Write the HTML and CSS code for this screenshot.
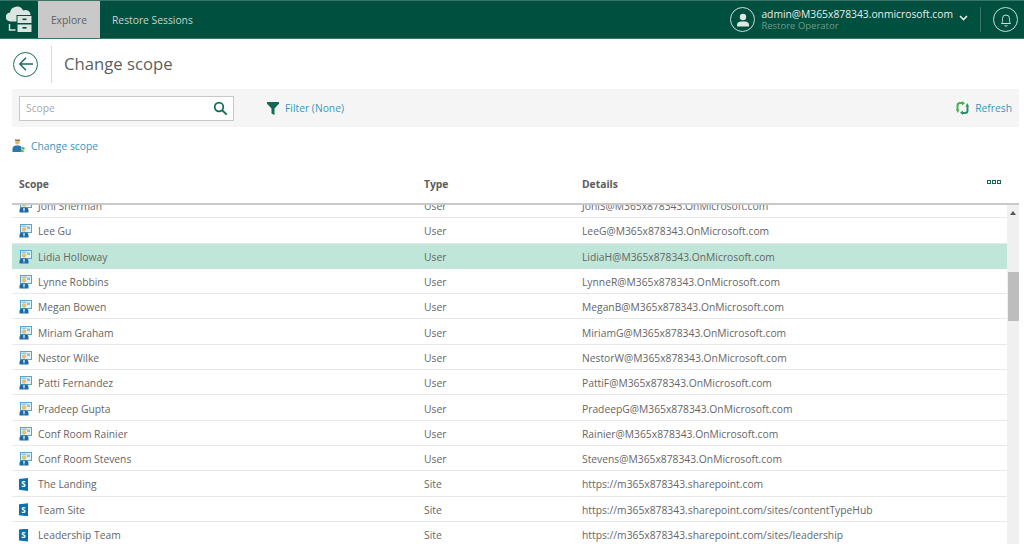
FILE: index.html
```html
<!DOCTYPE html>
<html lang="en">
<head>
<meta charset="utf-8">
<title>Change scope</title>
<link rel="stylesheet" href="styles.css">
</head>
<body>
<svg class="defs" width="0" height="0" aria-hidden="true">
  <symbol id="user" viewBox="0 0 13 14">
    <rect x="1.500" y="0.500" width="11" height="8" fill="#e4f0f6" stroke="#5aa3cd"/>
    <rect x="8" y="2.500" width="3" height="2.500" fill="#8cc0dc"/>
    <rect x="2.500" y="1.500" width="5" height="1.500" fill="#9ac6de"/>
    <circle cx="5" cy="5.500" r="2.200" fill="#e6bd72"/>
    <path d="M0.500 13.500V11q0-2.200 2.200-2.500h4.600q2.200.3 2.200 2.500v2.500z" fill="#1f6aa5"/>
    <path d="M5 8.500l-.9 1.200.9 3.800.9-3.800z" fill="#dfeaf2"/>
  </symbol>
</svg>

<header class="topbar">
  <div class="brand">
    <svg width="27" height="28" viewBox="0 0 27 28">
      <path d="M4.500 15.500a4.500 4.500 0 0 1-.5-9A7 7 0 0 1 17.200 4.500 5 5 0 0 1 24.500 9H10.500v6.500z" fill="#dbe5e1"/>
      <path d="M3.500 18v6h6" fill="none" stroke="#dbe5e1" stroke-width="1.400"/>
      <path d="M11.500 10h14v7h-14zM11.500 18.500h14V26h-14z" fill="#dbe5e1"/>
      <rect x="16.500" y="12.500" width="4" height="1.600" fill="#00503f"/>
      <rect x="16.500" y="21" width="4" height="1.600" fill="#00503f"/>
    </svg>
  </div>
  <nav class="tabs">
    <a class="tab tab-active">Explore</a>
    <a class="tab">Restore Sessions</a>
  </nav>
  <div class="account">
    <span class="avatar">
      <svg width="14" height="14" viewBox="0 0 14 14"><circle cx="7" cy="4" r="3.200" fill="#dfe8e4"/><path d="M1 13.500V12q0-3 3.500-3.500h5Q13 9 13 12v1.500z" fill="#dfe8e4"/></svg>
    </span>
    <div class="who">
      <div class="who-name">admin@M365x878343.onmicrosoft.com</div>
      <div class="who-role">Restore Operator</div>
    </div>
    <svg class="caret" width="9" height="6" viewBox="0 0 9 6"><path d="M1 1l3.500 3.500L8 1" fill="none" stroke="#e6eeeb" stroke-width="1.600"/></svg>
    <span class="bar-sep"></span>
    <span class="bell">
      <svg width="14" height="16" viewBox="0 0 14 16"><path d="M2.500 11.500c1-1 1-2.500 1-5a3.500 3.500 0 0 1 7 0c0 2.500 0 4 1 5zM5.500 13.500q1.500 1.400 3 0" fill="none" stroke="#cfdcd7" stroke-width="1"/></svg>
    </span>
  </div>
</header>

<section class="title-row">
  <button class="back" aria-label="Back">
    <svg width="16" height="16" viewBox="0 0 16 16"><path d="M15 8H2M8 1.800 1.800 8 8 14.200" fill="none" stroke="#1a6b57" stroke-width="1.400"/></svg>
  </button>
  <h1 class="title">Change scope</h1>
</section>

<section class="toolbar">
  <div class="search">
    <span class="search-text">Scope</span>
    <svg width="15" height="15" viewBox="0 0 15 15"><circle cx="6" cy="6" r="4.300" fill="none" stroke="#0f6b55" stroke-width="1.700"/><path d="M9.300 9.300l4.400 4.400" stroke="#0f6b55" stroke-width="1.900"/></svg>
  </div>
  <a class="link filter">
    <svg width="12" height="13" viewBox="0 0 12 13"><path d="M0 0h12v1.800L7.500 6.500V13L4.500 11.500V6.500L0 1.800z" fill="#0f6b55"/></svg>
    Filter (None)
  </a>
  <a class="link refresh">
    <svg width="13" height="14" viewBox="0 0 13 14">
      <path d="M6.500 2H4Q1.500 2 1.500 4.500V9" fill="none" stroke="#4cae4f" stroke-width="2"/>
      <path d="M6 0v4.500L9 2.200zM0 8.500h3.500L1.700 12z" fill="#4cae4f"/>
      <path d="M6.500 12H9q2.500 0 2.500-2.500V5" fill="none" stroke="#2f8f6b" stroke-width="2"/>
      <path d="M7 14V9.500L4 11.800zM13 5.500H9.500L11.300 2z" fill="#2f8f6b"/>
    </svg>
    Refresh
  </a>
</section>

<a class="link scope-link">
  <svg width="14" height="14" viewBox="0 0 14 14">
    <circle cx="5.500" cy="3.200" r="2.300" fill="#e0b870"/>
    <rect x="3" y="0.500" width="5" height="1.500" fill="#8a7a45"/>
    <path d="M0.500 13v-3Q.5 7 3.500 6.500h4Q9 7 9.500 8v5z" fill="#2a79ac"/>
    <path d="M10 7.500l3 1.500-1 2-2-1zM8.500 12.500l1-2 3 1.500-2 1.500z" fill="#62b566"/>
  </svg>
  Change scope
</a>

<section class="table">
  <div class="head">
    <div class="head-row">
      <span class="cell-scope">Scope</span>
      <span>Type</span>
      <span>Details</span>
    </div>
    <span class="columns-btn"><i></i><i></i><i></i></span>
  </div>
  <div class="body">
    <div class="rows">
      <div class="row"><span class="cell-scope"><svg class="ico"><use href="#user"/></svg>Joni Sherman</span><span>User</span><span>JoniS@M365x878343.OnMicrosoft.com</span></div>
      <div class="row"><span class="cell-scope"><svg class="ico"><use href="#user"/></svg>Lee Gu</span><span>User</span><span>LeeG@M365x878343.OnMicrosoft.com</span></div>
      <div class="row row-selected"><span class="cell-scope"><svg class="ico"><use href="#user"/></svg>Lidia Holloway</span><span>User</span><span>LidiaH@M365x878343.OnMicrosoft.com</span></div>
      <div class="row"><span class="cell-scope"><svg class="ico"><use href="#user"/></svg>Lynne Robbins</span><span>User</span><span>LynneR@M365x878343.OnMicrosoft.com</span></div>
      <div class="row"><span class="cell-scope"><svg class="ico"><use href="#user"/></svg>Megan Bowen</span><span>User</span><span>MeganB@M365x878343.OnMicrosoft.com</span></div>
      <div class="row"><span class="cell-scope"><svg class="ico"><use href="#user"/></svg>Miriam Graham</span><span>User</span><span>MiriamG@M365x878343.OnMicrosoft.com</span></div>
      <div class="row"><span class="cell-scope"><svg class="ico"><use href="#user"/></svg>Nestor Wilke</span><span>User</span><span>NestorW@M365x878343.OnMicrosoft.com</span></div>
      <div class="row"><span class="cell-scope"><svg class="ico"><use href="#user"/></svg>Patti Fernandez</span><span>User</span><span>PattiF@M365x878343.OnMicrosoft.com</span></div>
      <div class="row"><span class="cell-scope"><svg class="ico"><use href="#user"/></svg>Pradeep Gupta</span><span>User</span><span>PradeepG@M365x878343.OnMicrosoft.com</span></div>
      <div class="row"><span class="cell-scope"><svg class="ico"><use href="#user"/></svg>Conf Room Rainier</span><span>User</span><span>Rainier@M365x878343.OnMicrosoft.com</span></div>
      <div class="row"><span class="cell-scope"><svg class="ico"><use href="#user"/></svg>Conf Room Stevens</span><span>User</span><span>Stevens@M365x878343.OnMicrosoft.com</span></div>
      <div class="row"><span class="cell-scope"><span class="site-ico">S</span>The Landing</span><span>Site</span><span>https://m365x878343.sharepoint.com</span></div>
      <div class="row"><span class="cell-scope"><span class="site-ico">S</span>Team Site</span><span>Site</span><span>https://m365x878343.sharepoint.com/sites/contentTypeHub</span></div>
      <div class="row"><span class="cell-scope"><span class="site-ico">S</span>Leadership Team</span><span>Site</span><span>https://m365x878343.sharepoint.com/sites/leadership</span></div>
    </div>
    <div class="scrollbar">
      <span class="arrow"></span>
      <span class="thumb"></span>
    </div>
  </div>
</section>
</body>
</html>
```

FILE: styles.css
```css
* { box-sizing: border-box; }
html, body { margin: 0; height: 544px; overflow: hidden; }
body { background: #fff; font-family: "Open Sans", sans-serif; font-size: 10.300px; color: #666; }
.defs { position: absolute; }

.topbar { height: 39px; display: flex; background: #00503f; border-top: 1px solid #3a7566; border-bottom: 1px solid #3a7566; }
.brand { width: 38px; display: flex; align-items: center; justify-content: center; }
.tabs { display: flex; }
.tab { display: flex; align-items: center; justify-content: center; color: #c3d4ce; padding: 0 12px; }
.tab-active { width: 62px; padding: 0; background: #c9c9c9; color: #5d6360; }
.account { margin-left: auto; display: flex; align-items: center; padding-right: 6px; }
.avatar, .bell { width: 25px; height: 25px; border: 1px solid #cfdcd7; border-radius: 50%; display: flex; align-items: center; justify-content: center; }
.who { margin-left: 6px; line-height: 11px; }
.who-name { color: #e6eeeb; }
.who-role { color: #6f9a8d; font-size: 9.500px; }
.caret { margin-left: 6px; margin-top: -4px; }
.bar-sep { width: 1px; height: 25px; background: #3a7566; margin: 0 12px 0 12px; }

.title-row { height: 50px; display: flex; align-items: center; padding: 0 0 0 13px; }
.back { width: 25px; height: 25px; padding: 0; border: 1px solid #1a6b57; border-radius: 50%; background: #fff; display: flex; align-items: center; justify-content: center; }
.title { margin: 0 0 0 13px; padding-left: 12px; height: 37px; border-left: 1px solid #d9d9d9; font-size: 16.700px; font-weight: 400; line-height: 36px; color: #5b6160; }

.toolbar { height: 38px; margin: 0 5px 0 12px; padding: 0 7px; display: flex; align-items: center; background: #f5f5f5; }
.search { width: 215px; height: 25px; padding: 0 5px 0 6px; display: flex; align-items: center; justify-content: space-between; background: #fff; border: 1px solid #c8c8c8; }
.search-text { color: #a8a8a8; }
.link { display: flex; align-items: center; color: #3d95bd; }
.filter { margin-left: 33px; gap: 6px; }
.refresh { margin-left: auto; gap: 6px; }
.scope-link { height: 38px; padding-left: 12px; gap: 5px; }

.table { margin: 0 5px 0 12px; }
.head { position: relative; height: 40px; border-bottom: 2px solid #c9c9c9; }
.head-row, .row { display: grid; grid-template-columns: 412px 158px 1fr; align-items: center; }
.head-row { height: 38px; font-weight: 700; color: #5c5c5c; }
.cell-scope { padding-left: 7px; display: flex; align-items: center; }
.columns-btn { position: absolute; right: 18px; top: 15px; display: flex; gap: 1px; }
.columns-btn i { width: 4px; height: 4px; border: 1px solid #0f6b55; }

.body { height: 340px; display: flex; overflow: hidden; }
.rows { flex: 1; margin-top: -12px; }
.row { height: 25.300px; padding-top: 2px; border-bottom: 1px solid #e8e8e8; }
.row-selected { background: #bfe6d8; border-bottom-color: #bfe6d8; }
.ico { width: 13px; height: 14px; margin-right: 6px; }
.site-ico { width: 9px; height: 13px; margin: 0 10px 0 0; display: flex; align-items: center; justify-content: center; background: #0b6fb0; color: #fff; font-size: 8px; font-weight: 700; line-height: 1; clip-path: polygon(0 8%, 100% 0, 100% 100%, 0 92%); }
.scrollbar { position: relative; width: 12px; background: #f0f0f0; padding: 6px 0 0 1px; }
.arrow { display: block; width: 0; margin-left: 2px; border: 3px solid transparent; border-top: 0; border-bottom: 4px solid #555; }
.thumb { position: absolute; left: 1px; right: 0; top: 67px; height: 49px; background: #bdbdbd; }
```
